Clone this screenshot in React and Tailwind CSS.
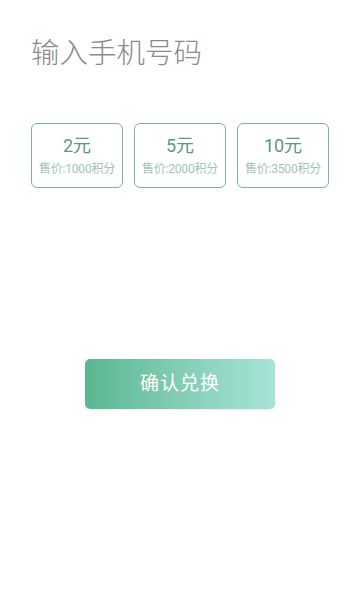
import React from 'react';

const options = [
  { value: '2元', price: '售价:1000积分' },
  { value: '5元', price: '售价:2000积分' },
  { value: '10元', price: '售价:3500积分' },
];

export default function App() {
  return (
    <div
      className="w-[360px] h-[594px] bg-white overflow-hidden"
      style={{ fontFamily: 'Roboto, "Noto Sans CJK SC", sans-serif' }}
    >
      <div className="pt-[33px] pl-[31px]">
        <h1 className="text-[28.5px] leading-[42px] text-[#8a8a8a] font-light">输入手机号码</h1>
      </div>

      <div className="mt-[48px] flex gap-[11px] pl-[31px]">
        {options.map(o => (
          <div
            key={o.value}
            className="w-[92px] h-[65px] border border-[#7fb0a0] rounded-[6px] flex flex-col items-center justify-center"
          >
            <div className="text-[18px] leading-[22px] text-[#5f9584]">{o.value}</div>
            <div className="text-[12px] leading-[16px] mt-[4px] text-[#9fc4b9] tracking-[-0.2px]">{o.price}</div>
          </div>
        ))}
      </div>

      <div className="mt-[171px] flex justify-center">
        <button className="w-[190px] h-[50px] rounded-[5px] bg-gradient-to-r from-[#5ab791] to-[#a8e3d8] text-white text-[19px] tracking-[1px] shadow-[0_1px_2px_rgba(0,0,0,0.08)]">
          确认兑换
        </button>
      </div>
    </div>
  );
}
